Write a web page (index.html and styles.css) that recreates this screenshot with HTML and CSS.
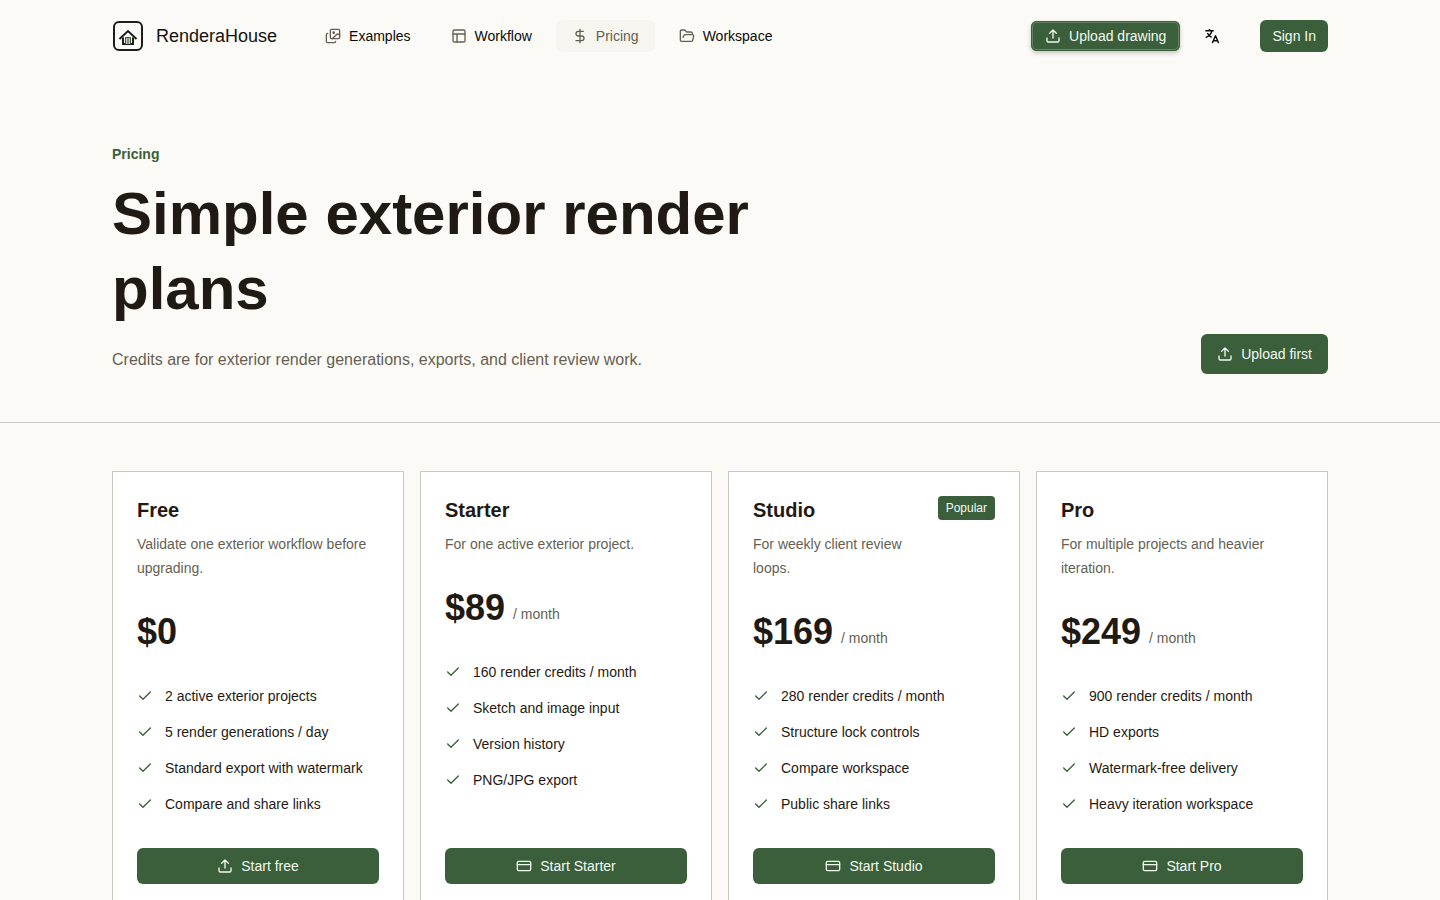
FILE: index.html
```html
<!DOCTYPE html>
<html lang="en">
<head>
    <meta charset="UTF-8">
    <meta name="viewport" content="width=device-width, initial-scale=1.0">
    <title>Pricing - RenderaHouse</title>
    <link rel="stylesheet" href="styles.css">
</head>
<body>
    <!-- Shared icons -->
    <svg class="sprite" aria-hidden="true">
        <symbol id="upload" viewBox="0 0 24 24">
            <path d="M12 3v12M17 8l-5-5-5 5M21 15v4a2 2 0 0 1-2 2H5a2 2 0 0 1-2-2v-4"/>
        </symbol>
        <symbol id="card" viewBox="0 0 24 24">
            <rect x="2" y="5" width="20" height="14" rx="2"/>
            <path d="M2 10h20"/>
        </symbol>
        <symbol id="check" viewBox="0 0 24 24">
            <path d="M20 6L9 17l-5-5"/>
        </symbol>
    </svg>

    <header class="container header">
        <a class="brand" href="/">
            <svg class="logo" viewBox="0 0 32 32" aria-hidden="true">
                <rect class="logo-frame" x="2" y="2" width="28" height="28" rx="5"/>
                <path class="logo-roof" d="M7.500 19L16 11l8.500 8"/>
                <path class="logo-walls" d="M11 17.500V24h10v-6.500"/>
                <path class="logo-door" d="M13 17h6v7h-6z"/>
                <path class="logo-slit" d="M13.500 24v-6.500h5V24M16 18v6"/>
            </svg>
            <span>RenderaHouse</span>
        </a>
        <nav class="nav">
            <a href="/examples">
                <svg class="icon" viewBox="0 0 24 24" aria-hidden="true">
                    <path d="m22 11-1.296-1.296a2.400 2.400 0 0 0-3.408 0L11 16M4 8a2 2 0 0 0-2 2v10a2 2 0 0 0 2 2h10a2 2 0 0 0 2-2"/>
                    <circle cx="13" cy="7" r="1" fill="currentColor"/>
                    <rect x="8" y="2" width="14" height="14" rx="2"/>
                </svg>
                Examples
            </a>
            <a href="/workflow">
                <svg class="icon" viewBox="0 0 24 24" aria-hidden="true">
                    <rect x="3" y="3" width="18" height="18" rx="2"/>
                    <path d="M3 9h18M9 21V9"/>
                </svg>
                Workflow
            </a>
            <a class="active" href="/pricing">
                <svg class="icon" viewBox="0 0 24 24" aria-hidden="true">
                    <path d="M12 2v20M17 5H9.500a3.500 3.500 0 0 0 0 7h5a3.500 3.500 0 0 1 0 7H6"/>
                </svg>
                Pricing
            </a>
            <a href="/workspace">
                <svg class="icon" viewBox="0 0 24 24" aria-hidden="true">
                    <path d="m6 14 1.500-2.900A2 2 0 0 1 9.240 10H20a2 2 0 0 1 1.940 2.500l-1.540 6a2 2 0 0 1-1.950 1.500H4a2 2 0 0 1-2-2V5a2 2 0 0 1 2-2h3.900a2 2 0 0 1 1.690.9l.81 1.200a2 2 0 0 0 1.670.9H18a2 2 0 0 1 2 2v2"/>
                </svg>
                Workspace
            </a>
        </nav>
        <div class="actions">
            <a class="btn btn-drawing" href="/upload">
                <svg class="icon" aria-hidden="true"><use href="#upload"/></svg>
                Upload drawing
            </a>
            <button class="lang-btn" type="button" aria-label="Change language">
                <svg class="icon" viewBox="0 0 24 24" aria-hidden="true">
                    <path d="M2 4h12.500M8.200 1.500V4M12 4C11 8.500 8 12 2.500 14.500M5 7.500c1.500 3 4 5 6.500 6.500M12.500 22.500l4.700-11 4.700 11M14 19h6.500"/>
                </svg>
            </button>
            <button class="btn btn-signin" type="button">Sign In</button>
        </div>
    </header>

    <main>
        <section class="hero">
            <div class="container hero-inner">
                <div class="hero-text">
                    <p class="eyebrow">Pricing</p>
                    <h1>Simple exterior render plans</h1>
                    <p class="lead">Credits are for exterior render generations, exports, and client review work.</p>
                </div>
                <a class="btn btn-hero" href="/upload">
                    <svg class="icon" aria-hidden="true"><use href="#upload"/></svg>
                    Upload first
                </a>
            </div>
        </section>

        <section class="container plans">
            <article class="plan">
                <div class="plan-head">
                    <div>
                        <h2>Free</h2>
                        <p>Validate one exterior workflow before upgrading.</p>
                    </div>
                </div>
                <div class="price"><strong>$0</strong></div>
                <ul>
                    <li><svg class="icon" aria-hidden="true"><use href="#check"/></svg>2 active exterior projects</li>
                    <li><svg class="icon" aria-hidden="true"><use href="#check"/></svg>5 render generations / day</li>
                    <li><svg class="icon" aria-hidden="true"><use href="#check"/></svg>Standard export with watermark</li>
                    <li><svg class="icon" aria-hidden="true"><use href="#check"/></svg>Compare and share links</li>
                </ul>
                <button class="btn btn-plan" type="button">
                    <svg class="icon" aria-hidden="true"><use href="#upload"/></svg>
                    Start free
                </button>
            </article>

            <article class="plan">
                <div class="plan-head">
                    <div>
                        <h2>Starter</h2>
                        <p>For one active exterior project.</p>
                    </div>
                </div>
                <div class="price"><strong>$89</strong><span>/ month</span></div>
                <ul>
                    <li><svg class="icon" aria-hidden="true"><use href="#check"/></svg>160 render credits / month</li>
                    <li><svg class="icon" aria-hidden="true"><use href="#check"/></svg>Sketch and image input</li>
                    <li><svg class="icon" aria-hidden="true"><use href="#check"/></svg>Version history</li>
                    <li><svg class="icon" aria-hidden="true"><use href="#check"/></svg>PNG/JPG export</li>
                </ul>
                <button class="btn btn-plan" type="button">
                    <svg class="icon" aria-hidden="true"><use href="#card"/></svg>
                    Start Starter
                </button>
            </article>

            <article class="plan">
                <div class="plan-head">
                    <div>
                        <h2>Studio</h2>
                        <p>For weekly client review loops.</p>
                    </div>
                    <span class="badge">Popular</span>
                </div>
                <div class="price"><strong>$169</strong><span>/ month</span></div>
                <ul>
                    <li><svg class="icon" aria-hidden="true"><use href="#check"/></svg>280 render credits / month</li>
                    <li><svg class="icon" aria-hidden="true"><use href="#check"/></svg>Structure lock controls</li>
                    <li><svg class="icon" aria-hidden="true"><use href="#check"/></svg>Compare workspace</li>
                    <li><svg class="icon" aria-hidden="true"><use href="#check"/></svg>Public share links</li>
                </ul>
                <button class="btn btn-plan" type="button">
                    <svg class="icon" aria-hidden="true"><use href="#card"/></svg>
                    Start Studio
                </button>
            </article>

            <article class="plan">
                <div class="plan-head">
                    <div>
                        <h2>Pro</h2>
                        <p>For multiple projects and heavier iteration.</p>
                    </div>
                </div>
                <div class="price"><strong>$249</strong><span>/ month</span></div>
                <ul>
                    <li><svg class="icon" aria-hidden="true"><use href="#check"/></svg>900 render credits / month</li>
                    <li><svg class="icon" aria-hidden="true"><use href="#check"/></svg>HD exports</li>
                    <li><svg class="icon" aria-hidden="true"><use href="#check"/></svg>Watermark-free delivery</li>
                    <li><svg class="icon" aria-hidden="true"><use href="#check"/></svg>Heavy iteration workspace</li>
                </ul>
                <button class="btn btn-plan" type="button">
                    <svg class="icon" aria-hidden="true"><use href="#card"/></svg>
                    Start Pro
                </button>
            </article>
        </section>
    </main>
</body>
</html>
```
FILE: styles.css
```css
* {
    box-sizing: border-box;
}
body {
    margin: 0;
    font-family: "Liberation Sans", Arial, sans-serif;
    font-size: 14px;
    line-height: 20px;
    background-color: #fcfaf6;
    color: #1f1a14;
}
h1, h2, p, ul {
    margin: 0;
    padding: 0;
}
a {
    color: inherit;
    text-decoration: none;
}
.sprite {
    display: none;
}
.container {
    width: 100%;
    max-width: 1280px;
    margin: 0 auto;
    padding: 0 32px;
}
.icon {
    width: 16px;
    height: 16px;
    flex-shrink: 0;
    fill: none;
    stroke: currentColor;
    stroke-width: 2;
    stroke-linecap: round;
    stroke-linejoin: round;
}

/* Buttons */
.btn {
    display: inline-flex;
    align-items: center;
    justify-content: center;
    gap: 8px;
    flex-shrink: 0;
    border: none;
    border-radius: 6px;
    background-color: #3a5f3a;
    color: #f3faf1;
    font: inherit;
    cursor: pointer;
}
.btn:hover {
    background-color: #467046;
}
.btn-drawing {
    height: 30px;
    padding: 0 14px;
    box-shadow: inset 0 0 0 1px #3a5f3a, inset 0 0 0 2px #64835f, 0 2px 4px rgba(31, 26, 20, 0.25);
}
.btn-signin {
    height: 32px;
    padding: 0 12px;
    margin-left: 16px;
}
.btn-hero {
    height: 40px;
    padding: 0 16px;
}
.btn-plan {
    width: 100%;
    height: 36px;
    margin-top: auto;
}

/* Header */
.header {
    display: flex;
    align-items: center;
    height: 72px;
}
.brand {
    display: flex;
    align-items: center;
    gap: 12px;
    margin-right: 32px;
    font-size: 18px;
    line-height: 28px;
    color: #14130f;
}
.logo {
    width: 32px;
    height: 32px;
    fill: none;
    stroke: #1c1e18;
    stroke-width: 2;
}
.logo-door {
    fill: #c3cfc1;
    stroke: none;
}
.logo-slit {
    stroke: #3a5f3a;
    stroke-width: 1;
}
.nav {
    display: flex;
    gap: 8px;
}
.nav a {
    display: flex;
    align-items: center;
    gap: 8px;
    height: 32px;
    padding: 0 16px;
    border-radius: 6px;
    color: #0a0a0a;
}
.nav .icon {
    color: #655f53;
}
.nav a.active,
.nav a:hover {
    background-color: #f7f5ef;
    color: #655f53;
}
.actions {
    display: flex;
    align-items: center;
    gap: 16px;
    margin-left: auto;
}
.lang-btn {
    display: flex;
    align-items: center;
    justify-content: center;
    width: 32px;
    height: 32px;
    padding: 0;
    border: none;
    background: none;
    color: #0a0a0a;
    cursor: pointer;
}
.lang-btn .icon {
    stroke-width: 2.2;
    stroke-linecap: butt;
}

/* Hero */
.hero {
    padding: 72px 0 48px;
    border-bottom: 1px solid #ccc9c3;
}
.hero-inner {
    display: flex;
    align-items: flex-end;
    justify-content: space-between;
    gap: 32px;
}
.hero-text {
    max-width: 768px;
}
.eyebrow {
    color: #3a5f3a;
    font-weight: bold;
}
h1 {
    margin-top: 12px;
    font-size: 60px;
    line-height: 75px;
}
.lead {
    margin-top: 20px;
    font-size: 16px;
    line-height: 28px;
    color: #655f53;
}

/* Plans */
.plans {
    display: grid;
    grid-template-columns: repeat(4, 1fr);
    gap: 16px;
    padding-top: 48px;
    padding-bottom: 48px;
}
.plan {
    display: flex;
    flex-direction: column;
    padding: 24px;
    border: 1px solid #ccc9c3;
    background-color: #fff;
}
.plan-head {
    display: flex;
    align-items: flex-start;
    justify-content: space-between;
    gap: 16px;
}
.plan h2 {
    font-size: 20px;
    line-height: 28px;
}
.plan-head p {
    margin-top: 8px;
    line-height: 24px;
    color: #655f53;
}
.badge {
    padding: 4px 8px;
    border-radius: 4px;
    background-color: #3a5f3a;
    color: #f3faf1;
    font-size: 12px;
    line-height: 16px;
}
.price {
    display: flex;
    align-items: flex-end;
    gap: 8px;
    margin-top: 32px;
}
.price strong {
    font-size: 36px;
    line-height: 40px;
}
.price span {
    padding-bottom: 4px;
    color: #655f53;
}
.plan ul {
    display: grid;
    gap: 12px;
    margin: 32px 0;
    list-style: none;
}
.plan li {
    display: flex;
    align-items: center;
    gap: 12px;
    line-height: 24px;
}
.plan li .icon {
    color: #3a5f3a;
}

@media (max-width: 1100px) {
    .nav {
        display: none;
    }
    .plans {
        grid-template-columns: repeat(2, 1fr);
    }
}
```
